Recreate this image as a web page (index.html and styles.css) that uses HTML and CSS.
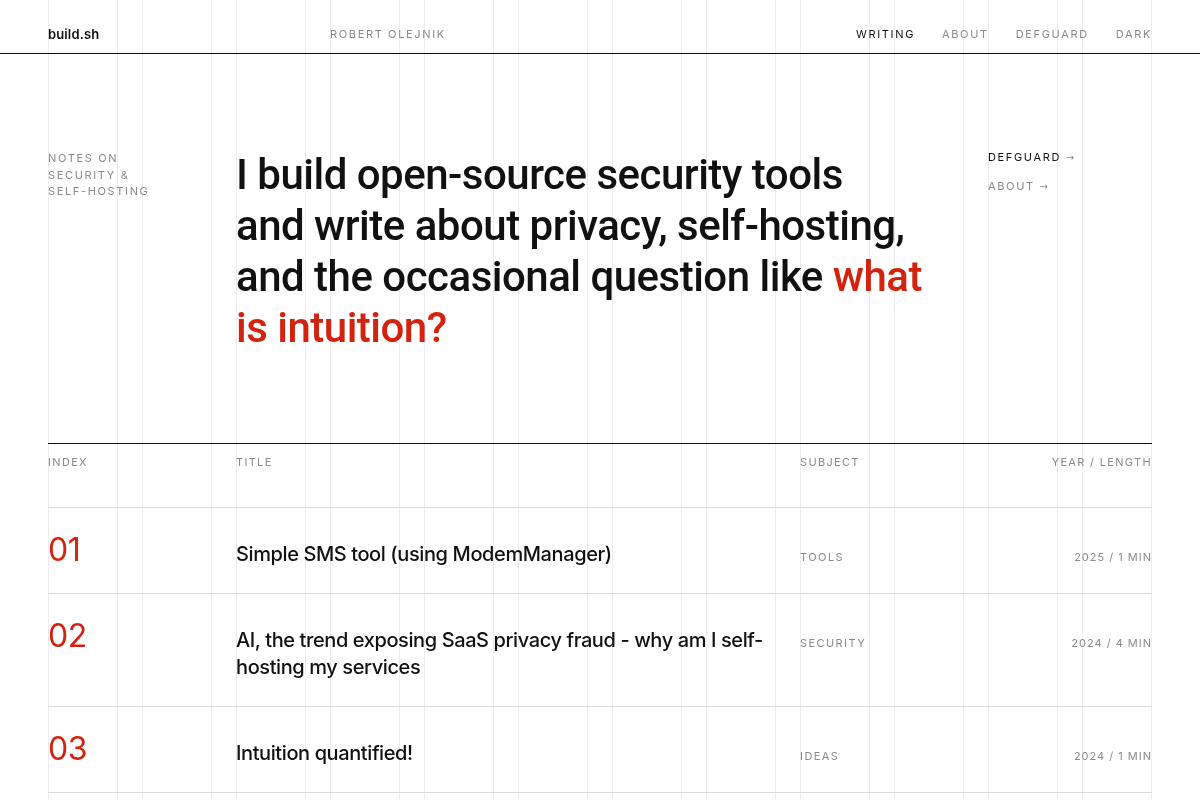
FILE: index.html
```html
<!DOCTYPE html>
<html lang="en">
<head>
<meta charset="utf-8">
<title>build.sh — Robert Olejnik</title>
<link rel="stylesheet" href="styles.css">
</head>
<body>
  <!-- background column guides -->
  <div class="guides" aria-hidden="true">
    <div class="guides-inner">
      <span></span><span></span><span></span><span></span><span></span><span></span>
      <span></span><span></span><span></span><span></span><span></span><span></span>
    </div>
  </div>

  <header class="site-header">
    <div class="wrap grid">
      <a class="brand" href="#">build.sh</a>
      <span class="author">ROBERT OLEJNIK</span>
      <nav class="nav">
        <a class="nav-link is-active" href="#">WRITING</a>
        <a class="nav-link" href="#">ABOUT</a>
        <a class="nav-link" href="#">DEFGUARD</a>
        <a class="nav-link" href="#">DARK</a>
      </nav>
    </div>
  </header>

  <main>
    <section class="hero wrap grid">
      <p class="hero-label">NOTES ON<br>SECURITY &amp;<br>SELF-HOSTING</p>
      <h1 class="hero-title">I build open-source security tools<br>and write about privacy, self-hosting,<br>and the occasional question like <em class="accent">what is intuition?</em></h1>
      <ul class="hero-links">
        <li><a class="hero-link is-strong" href="#">DEFGUARD <span class="arrow">→</span></a></li>
        <li><a class="hero-link" href="#">ABOUT <span class="arrow">→</span></a></li>
      </ul>
    </section>

    <section class="posts wrap">
      <div class="post-head grid">
        <span class="col-index">INDEX</span>
        <span class="col-title">TITLE</span>
        <span class="col-subject">SUBJECT</span>
        <span class="col-meta">YEAR / LENGTH</span>
      </div>

      <a class="post grid" href="#">
        <span class="post-index">01</span>
        <span class="post-title">Simple SMS tool (using ModemManager)</span>
        <span class="post-subject">TOOLS</span>
        <span class="post-meta">2025 / 1 MIN</span>
      </a>

      <a class="post grid" href="#">
        <span class="post-index">02</span>
        <span class="post-title">AI, the trend exposing SaaS privacy fraud - why am I self-hosting my services</span>
        <span class="post-subject">SECURITY</span>
        <span class="post-meta">2024 / 4 MIN</span>
      </a>

      <a class="post grid" href="#">
        <span class="post-index">03</span>
        <span class="post-title">Intuition quantified!</span>
        <span class="post-subject">IDEAS</span>
        <span class="post-meta">2024 / 1 MIN</span>
      </a>
    </section>
  </main>
</body>
</html>
```

FILE: styles.css
```css
:root {
  --ink: #111111;
  --muted: #8a8a8a;
  --accent: #d3230f;
  --guide: #ececec;
  --rule: #dcdcdc;
  --col: 70px;
  --gap: 24px;
}

* { box-sizing: border-box; }

html, body {
  margin: 0;
  padding: 0;
}

body {
  background: #ffffff;
  color: var(--ink);
  font-family: Inter, "Liberation Sans", Arial, sans-serif;
  -webkit-font-smoothing: antialiased;
}

a { color: inherit; text-decoration: none; }

.wrap {
  width: 1104px;
  margin: 0 auto;
}

.grid {
  display: grid;
  grid-template-columns: repeat(12, var(--col));
  column-gap: var(--gap);
}

/* column guides behind the page */
.guides {
  position: fixed;
  inset: 0;
  z-index: -1;
  pointer-events: none;
}
.guides-inner {
  width: 1104px;
  height: 100%;
  margin: 0 auto;
  display: grid;
  grid-template-columns: repeat(12, var(--col));
  column-gap: var(--gap);
}
.guides-inner span {
  border-left: 1px solid var(--guide);
  border-right: 1px solid var(--guide);
}

/* small uppercase labels */
.author,
.nav-link,
.hero-label,
.hero-link,
.post-head span,
.post-subject,
.post-meta {
  font-size: 11px;
  letter-spacing: 0.15em;
  color: var(--muted);
}

/* header */
.site-header {
  height: 54px;
  border-bottom: 1px solid var(--ink);
  padding-top: 26px;
}
.site-header .grid { align-items: center; line-height: 16px; }
.brand {
  grid-column: 1 / 4;
  font-size: 13px;
  font-weight: 600;
  letter-spacing: 0.01em;
}
.author { grid-column: 4 / 8; }
.nav {
  grid-column: 8 / 13;
  display: flex;
  justify-content: flex-end;
  gap: 27px;
}
.nav-link.is-active { color: var(--ink); }

/* hero */
.hero {
  padding: 95px 0 90px;
  align-items: start;
}
.hero-label {
  grid-column: 1 / 3;
  margin: 0;
  padding-top: 1px;
  line-height: 16.5px;
}
.hero-title {
  grid-column: 3 / 11;
  margin: 0;
  max-width: 700px;
  font-family: Roboto, Inter, "Liberation Sans", sans-serif;
  font-size: 42px;
  line-height: 51px;
  font-weight: 500;
  letter-spacing: -0.012em;
}
.accent {
  color: var(--accent);
  font-style: normal;
}
.hero-links {
  grid-column: 11 / 13;
  list-style: none;
  margin: -2px 0 0;
  padding: 0;
}
.hero-links li { line-height: 16px; height: 16px; }
.hero-links li + li { margin-top: 13px; }
.hero-link.is-strong { color: var(--ink); }
.arrow {
  letter-spacing: 0;
  font-size: 10px;
  line-height: 16px;
  color: var(--muted);
  font-family: "DejaVu Sans", sans-serif;
}

/* post index */
.post-head {
  border-top: 1px solid var(--ink);
  border-bottom: 1px solid var(--rule);
  padding: 10px 0 37px;
  line-height: 16px;
}
.post-head span { letter-spacing: 0.12em; }
.col-index { grid-column: 1 / 3; }
.col-title { grid-column: 3 / 9; }
.col-subject { grid-column: 9 / 11; }
.col-meta { grid-column: 11 / 13; text-align: right; }

.post {
  padding: 33px 0 25px;
  border-bottom: 1px solid var(--rule);
  align-items: start;
}
.post-index {
  grid-column: 1 / 3;
  margin-top: -3px;
  color: var(--accent);
  font-size: 32px;
  line-height: 24px;
  font-weight: 400;
  letter-spacing: -0.01em;
}
.post-title {
  grid-column: 3 / 9;
  font-size: 20px;
  line-height: 27px;
  font-weight: 500;
  letter-spacing: -0.02em;
}
.post-subject {
  grid-column: 9 / 11;
  line-height: 16px;
  padding-top: 8px;
  letter-spacing: 0.13em;
}
.post-meta {
  grid-column: 11 / 13;
  text-align: right;
  line-height: 16px;
  padding-top: 8px;
  letter-spacing: 0.09em;
}
```
